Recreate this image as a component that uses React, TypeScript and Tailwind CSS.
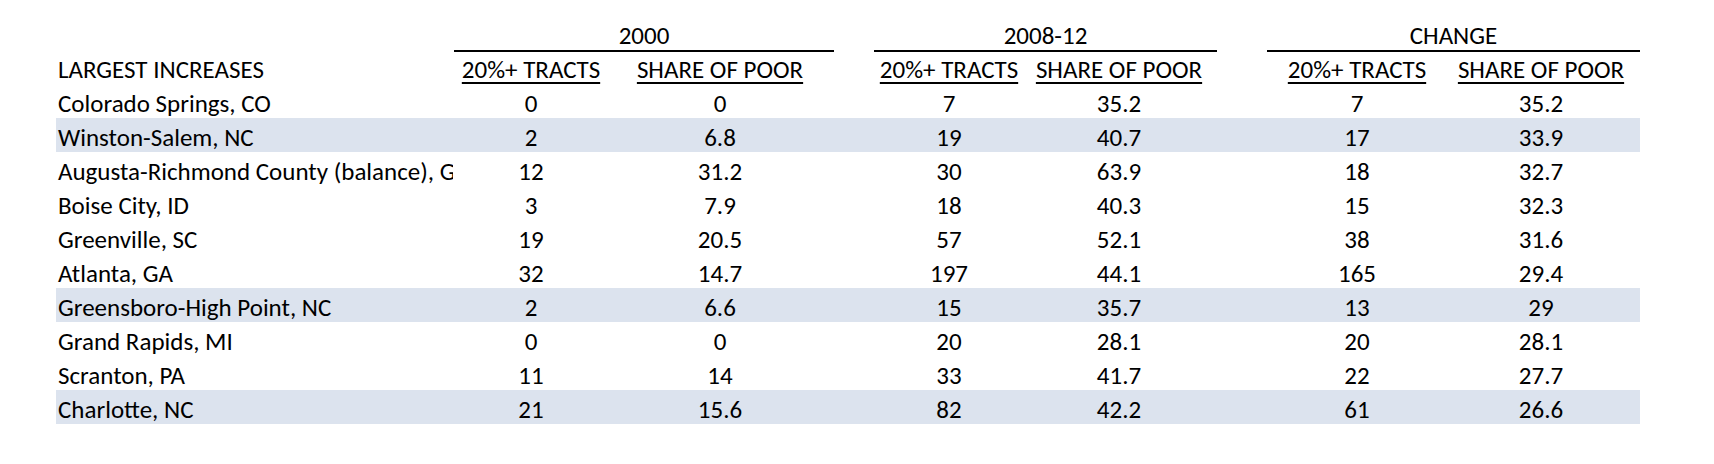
import React from "react";

type Row = {
  name: string;
  a: string;
  b: string;
  c: string;
  d: string;
  e: string;
  f: string;
  shaded?: boolean;
};

const rows: Row[] = [
  { name: "Colorado Springs, CO", a: "0", b: "0", c: "7", d: "35.2", e: "7", f: "35.2" },
  { name: "Winston-Salem, NC", a: "2", b: "6.8", c: "19", d: "40.7", e: "17", f: "33.9", shaded: true },
  { name: "Augusta-Richmond County (balance), GA", a: "12", b: "31.2", c: "30", d: "63.9", e: "18", f: "32.7" },
  { name: "Boise City, ID", a: "3", b: "7.9", c: "18", d: "40.3", e: "15", f: "32.3" },
  { name: "Greenville, SC", a: "19", b: "20.5", c: "57", d: "52.1", e: "38", f: "31.6" },
  { name: "Atlanta, GA", a: "32", b: "14.7", c: "197", d: "44.1", e: "165", f: "29.4" },
  { name: "Greensboro-High Point, NC", a: "2", b: "6.6", c: "15", d: "35.7", e: "13", f: "29", shaded: true },
  { name: "Grand Rapids, MI", a: "0", b: "0", c: "20", d: "28.1", e: "20", f: "28.1" },
  { name: "Scranton, PA", a: "11", b: "14", c: "33", d: "41.7", e: "22", f: "27.7" },
  { name: "Charlotte, NC", a: "21", b: "15.6", c: "82", d: "42.2", e: "61", f: "26.6", shaded: true },
];

// column slots, left to right (label col is 397px wide, starting at x=56)
const cols = [
  "w-[156px]",
  "w-[170px] ml-[26px]",
  "w-[170px] ml-[59px]",
  "w-[170px]",
  "w-[170px] ml-[68px]",
  "w-[170px] ml-[14px]",
];

function Cell({ cls, children }: { cls: string; children: React.ReactNode }) {
  return (
    <div className={`${cls} flex shrink-0 justify-center whitespace-nowrap`}>
      {children}
    </div>
  );
}

export default function App() {
  return (
    <div className="h-[464px] w-[1714px] bg-white font-['Carlito','Lato',sans-serif] text-[25px] text-black">
      <div className="ml-[56px] w-[1584px]">
        {/* group titles with rules */}
        <div className="flex h-[52px] items-end">
          <div className="w-[398px] shrink-0" />
          <div className="flex w-[380px] shrink-0 justify-center border-b-2 border-black pb-[2px] leading-none">
            2000
          </div>
          <div className="ml-[40px] flex w-[343px] shrink-0 justify-center border-b-2 border-black pb-[2px] leading-none">
            2008-12
          </div>
          <div className="ml-[50px] flex w-[373px] shrink-0 justify-center border-b-2 border-black pb-[2px] leading-none">
            CHANGE
          </div>
        </div>

        {/* sub headers */}
        <div className="flex h-[32px] items-center pt-[3px]">
          <div className="w-[397px] shrink-0 pl-[2px]">LARGEST INCREASES</div>
          {["20%+ TRACTS", "SHARE OF POOR", "20%+ TRACTS", "SHARE OF POOR", "20%+ TRACTS", "SHARE OF POOR"].map(
            (h, i) => (
              <Cell key={i} cls={cols[i]}>
                <span className="underline decoration-[1.5px] underline-offset-[4px]">{h}</span>
              </Cell>
            )
          )}
        </div>

        {/* data */}
        {rows.map((r) => (
          <div
            key={r.name}
            className={`flex h-[34px] items-center pt-[5px] ${r.shaded ? "bg-[#dce3ee]" : ""}`}
          >
            <div className="w-[397px] shrink-0 overflow-hidden whitespace-nowrap pl-[2px]">
              {r.name}
            </div>
            <Cell cls={cols[0]}>{r.a}</Cell>
            <Cell cls={cols[1]}>{r.b}</Cell>
            <Cell cls={cols[2]}>{r.c}</Cell>
            <Cell cls={cols[3]}>{r.d}</Cell>
            <Cell cls={cols[4]}>{r.e}</Cell>
            <Cell cls={cols[5]}>{r.f}</Cell>
          </div>
        ))}
      </div>
    </div>
  );
}
